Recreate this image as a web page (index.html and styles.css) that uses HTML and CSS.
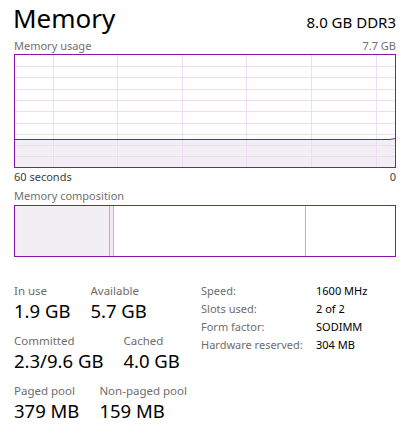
FILE: index.html
```html
<!DOCTYPE html>
<html>
<head>
<meta charset="utf-8">
<link rel="stylesheet" href="styles.css">
</head>
<body>
<div class="page">
  <div class="header">
    <div class="title">Memory</div>
    <div class="spec">8.0 GB DDR3</div>
  </div>
  <div class="caption"><span>Memory usage</span><span>7.7 GB</span></div>
  <svg class="graph" width="382" height="114" viewBox="0 0 382 114">
    <rect x="0" y="85" width="382" height="29" fill="#f1eff3"/>
    <g stroke="#eedcf2" stroke-width="1">
      <line x1="39.5" y1="0" x2="39.5" y2="114"/>
      <line x1="103.5" y1="0" x2="103.5" y2="114"/>
      <line x1="168.5" y1="0" x2="168.5" y2="114"/>
      <line x1="232.5" y1="0" x2="232.5" y2="114"/>
      <line x1="297.5" y1="0" x2="297.5" y2="114"/>
      <line x1="362.5" y1="0" x2="362.5" y2="114"/>
      <line x1="0" y1="12.5" x2="382" y2="12.5"/>
      <line x1="0" y1="23.5" x2="382" y2="23.5"/>
      <line x1="0" y1="35.5" x2="382" y2="35.5"/>
      <line x1="0" y1="46.5" x2="382" y2="46.5"/>
      <line x1="0" y1="57.5" x2="382" y2="57.5"/>
      <line x1="0" y1="69.5" x2="382" y2="69.5"/>
      <line x1="0" y1="80.5" x2="382" y2="80.5"/>
      <line x1="0" y1="91.5" x2="382" y2="91.5"/>
      <line x1="0" y1="102.5" x2="382" y2="102.5"/>
    </g>
    <polyline points="0,85.5 376,85.5 381,84.5" fill="none" stroke="#8b12ae" stroke-width="1"/>
    <rect x="0.5" y="0.5" width="381" height="113" fill="none" stroke="#8b12ae" stroke-width="1"/>
  </svg>
  <div class="caption axis"><span>60 seconds</span><span>0</span></div>
  <div class="caption comp-label"><span>Memory composition</span></div>
  <div class="composition">
    <div class="seg inuse" style="width:95px"></div>
    <div class="seg modified" style="width:4px"></div>
    <div class="seg standby" style="width:192px"></div>
    <div class="seg free"></div>
  </div>
  <div class="stats">
    <div class="left">
      <div class="row">
        <div class="stat"><div class="label">In use</div><div class="value">1.9 GB</div></div>
        <div class="stat"><div class="label">Available</div><div class="value">5.7 GB</div></div>
      </div>
      <div class="row">
        <div class="stat"><div class="label">Committed</div><div class="value">2.3/9.6 GB</div></div>
        <div class="stat"><div class="label">Cached</div><div class="value">4.0 GB</div></div>
      </div>
      <div class="row">
        <div class="stat"><div class="label">Paged pool</div><div class="value">379 MB</div></div>
        <div class="stat"><div class="label">Non-paged pool</div><div class="value">159 MB</div></div>
      </div>
    </div>
    <div class="right">
      <div class="kv"><span class="k">Speed:</span><span class="v">1600 MHz</span></div>
      <div class="kv"><span class="k">Slots used:</span><span class="v">2 of 2</span></div>
      <div class="kv"><span class="k">Form factor:</span><span class="v">SODIMM</span></div>
      <div class="kv"><span class="k">Hardware reserved:</span><span class="v">304 MB</span></div>
    </div>
  </div>
</div>
</body>
</html>
```
FILE: styles.css
```css
html, body {
  margin: 0;
  padding: 0;
  background: #ffffff;
}
body {
  font-family: "Noto Sans", "Open Sans", sans-serif;
  color: #000;
}
.page {
  width: 382px;
  padding-left: 14px;
}
.header {
  display: flex;
  justify-content: space-between;
  align-items: baseline;
  height: 38px;
}
.title {
  font-size: 26px;
  line-height: 36px;
  margin-left: -1px;
}
.spec {
  font-size: 15px;
  line-height: 20px;
}
.caption {
  display: flex;
  justify-content: space-between;
  font-size: 11px;
  line-height: 16px;
  color: #707070;
  height: 16px;
}
.graph {
  display: block;
}
.axis {
  color: #404040;
  margin-top: 1px;
}
.comp-label {
  margin-top: 3px;
}
.composition {
  margin-top: 1px;
  height: 50px;
  border: 1px solid #8b12ae;
  display: flex;
}
.seg {
  height: 100%;
  box-sizing: border-box;
}
.inuse {
  background: #f1eff3;
  border-right: 1px solid #c9a7d7;
}
.modified {
  background: #f3eaf6;
  border-right: 1px solid #c9a7d7;
}
.standby {
  border-right: 1px solid #c9a7d7;
}
.free {
  flex: 1;
}
.stats {
  display: flex;
  margin-top: 26px;
}
.left {
  width: 187px;
  display: flex;
  flex-direction: column;
  gap: 9px;
}
.row {
  display: flex;
  gap: 20px;
}
.label {
  font-size: 11.5px;
  line-height: 15px;
  color: #6d6d6d;
}
.value {
  font-size: 18.5px;
  line-height: 26px;
}
.right {
  display: flex;
  flex-direction: column;
  margin-top: -1px;
}
.kv {
  display: flex;
  font-size: 11px;
  line-height: 18px;
}
.k {
  width: 115px;
  color: #6d6d6d;
}
.v {
  color: #000;
}
```
